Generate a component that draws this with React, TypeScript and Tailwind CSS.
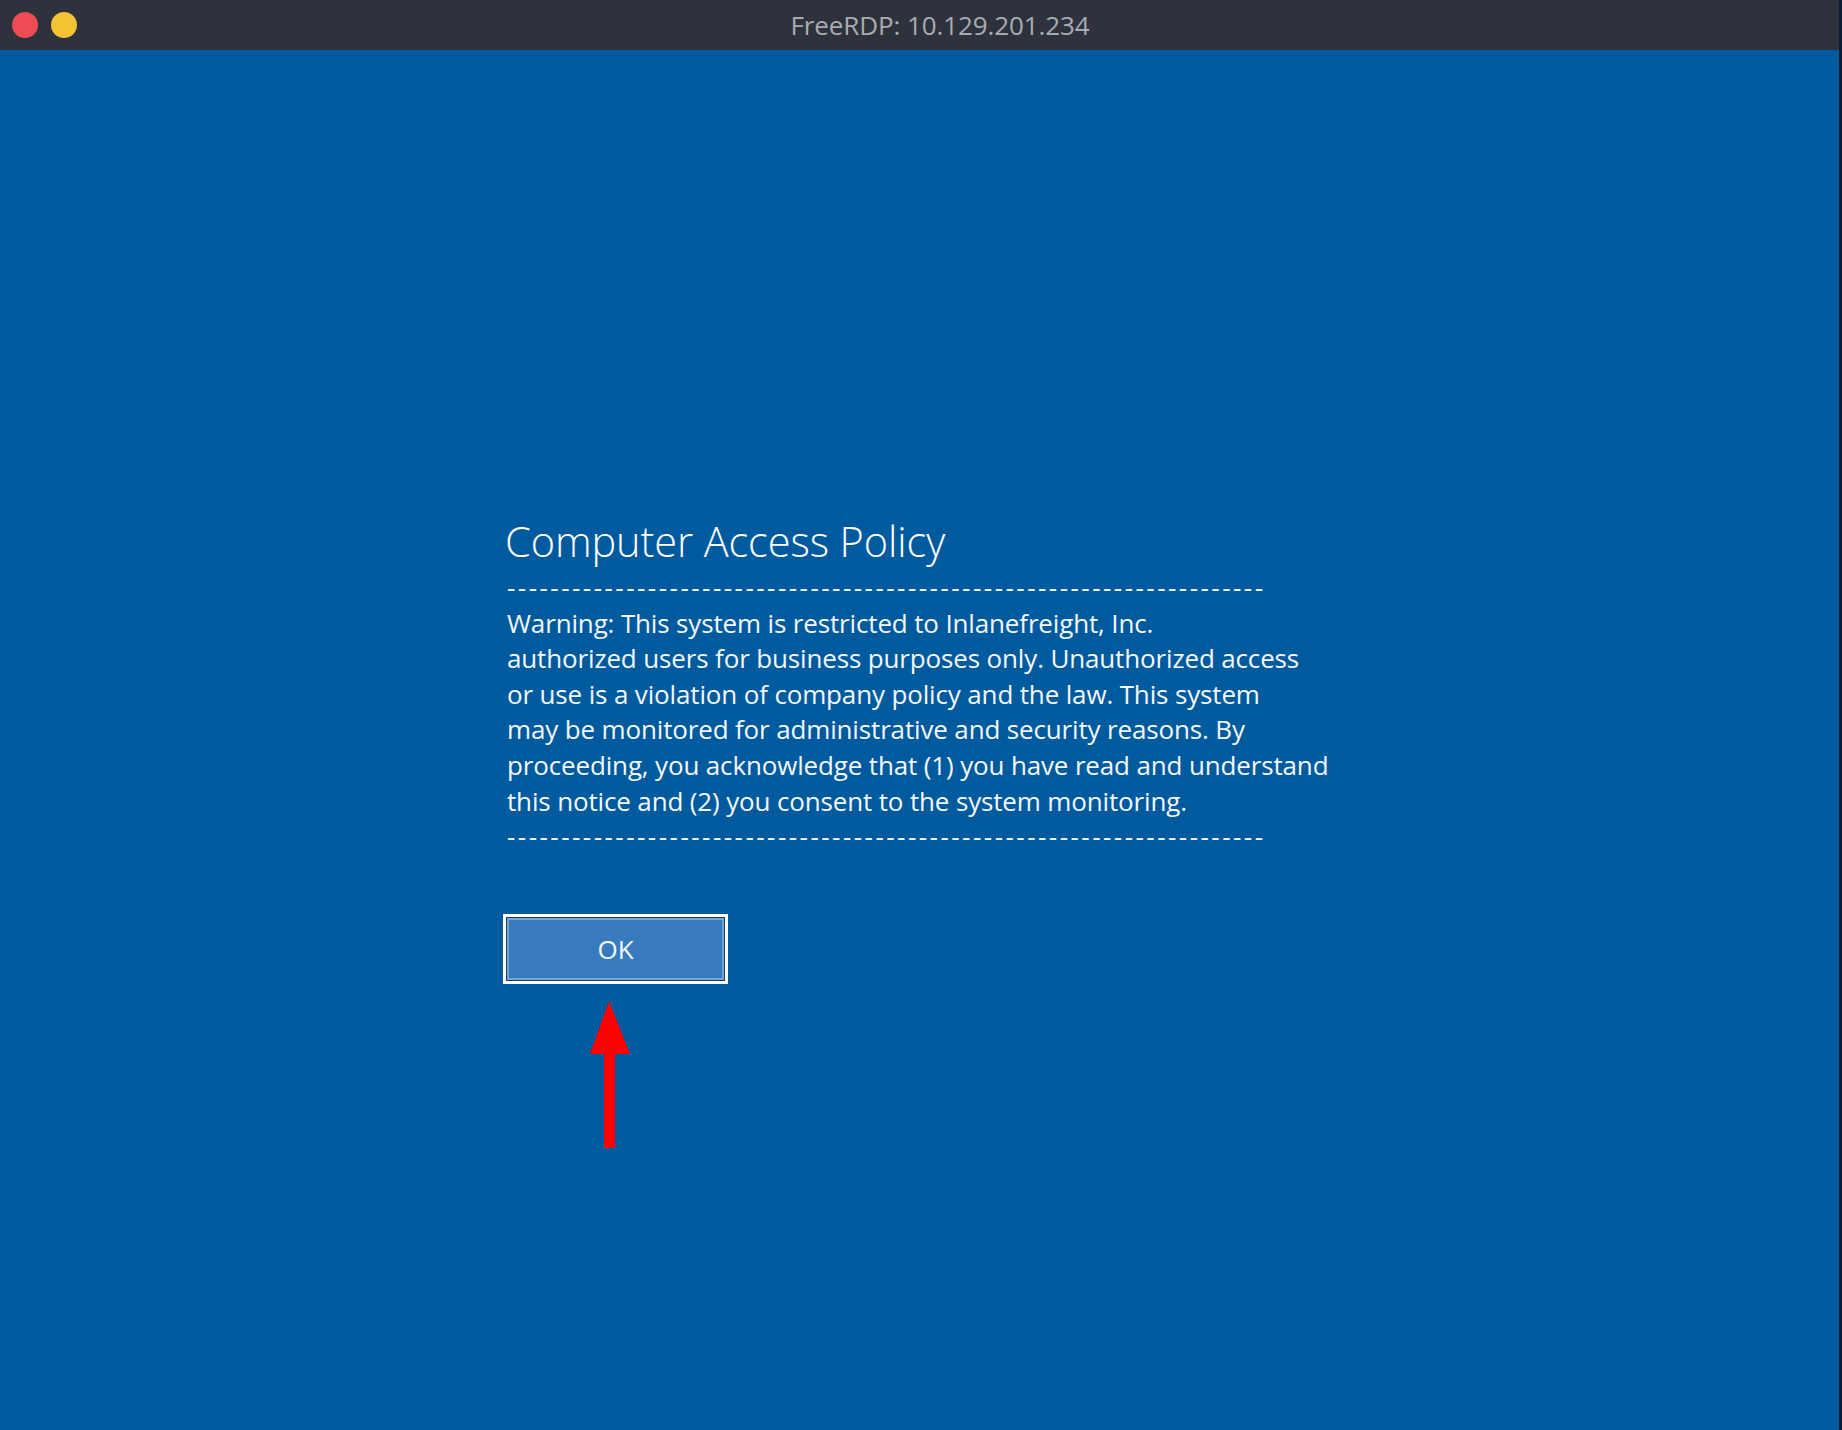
import React from "react";

const DASHES = "-".repeat(70);

export default function App() {
  return (
    <div
      className="flex h-[1430px] w-[1842px] overflow-hidden bg-[#005a9e]"
      style={{ fontFamily: '"Open Sans", "Noto Sans", sans-serif' }}
    >
      <div className="flex min-w-0 flex-1 flex-col">
        {/* Title bar */}
        <div className="relative flex h-[50px] shrink-0 items-center bg-[#2e323c]">
          <div className="flex items-center gap-[13px] pl-[12px]">
            <span className="block h-[26px] w-[26px] rounded-full bg-[#ee4b55]" />
            <span className="block h-[26px] w-[26px] rounded-full bg-[#f5c233]" />
          </div>
          <div className="flex flex-1 justify-center pl-[22px] pr-[58px]">
            <span className="text-[26px] leading-none tracking-[-0.1px] text-[#a8acb2]">
              FreeRDP: 10.129.201.234
            </span>
          </div>
        </div>

        {/* Desktop */}
        <div className="flex flex-1 flex-col bg-[#005a9e] pl-[505px] pt-[462px] text-white">
          <h1 className="text-[41.5px] font-light leading-[58px] tracking-[-0.1px] text-white">
            Computer Access Policy
          </h1>
          <div className="pl-[2px] text-[26px] leading-[35.6px] tracking-[-0.15px] text-[#f4f8fc]">
            <div className="tracking-[2.47px]">{DASHES}</div>
            <div>Warning: This system is restricted to Inlanefreight, Inc.</div>
            <div>authorized users for business purposes only. Unauthorized access</div>
            <div>or use is a violation of company policy and the law. This system</div>
            <div>may be monitored for administrative and security reasons. By</div>
            <div>proceeding, you acknowledge that (1) you have read and understand</div>
            <div>this notice and (2) you consent to the system monitoring.</div>
            <div className="tracking-[2.47px]">{DASHES}</div>
          </div>

          <div className="-ml-[2px] mt-[59px] flex flex-col items-start">
            <button className="h-[70px] w-[225px] border-[3px] border-white bg-transparent p-0">
              <div className="h-full w-full border border-[#1d3a5c]">
                <div className="flex h-full w-full items-center justify-center border-2 border-[#74a6d6] bg-[#377bbd] text-[26px] leading-none text-[#f2f6fa]">
                  OK
                </div>
              </div>
            </button>
            <svg
              className="ml-[87px] mt-[17px]"
              width="40"
              height="148"
              viewBox="0 0 40 148"
            >
              <polygon points="19,0 0,53 40,53" fill="#ff0000" />
              <rect x="14" y="50" width="11" height="97" fill="#ff0000" />
            </svg>
          </div>
        </div>
      </div>
      <div className="h-full w-[3px] shrink-0 bg-[#0d1c30]" />
    </div>
  );
}
